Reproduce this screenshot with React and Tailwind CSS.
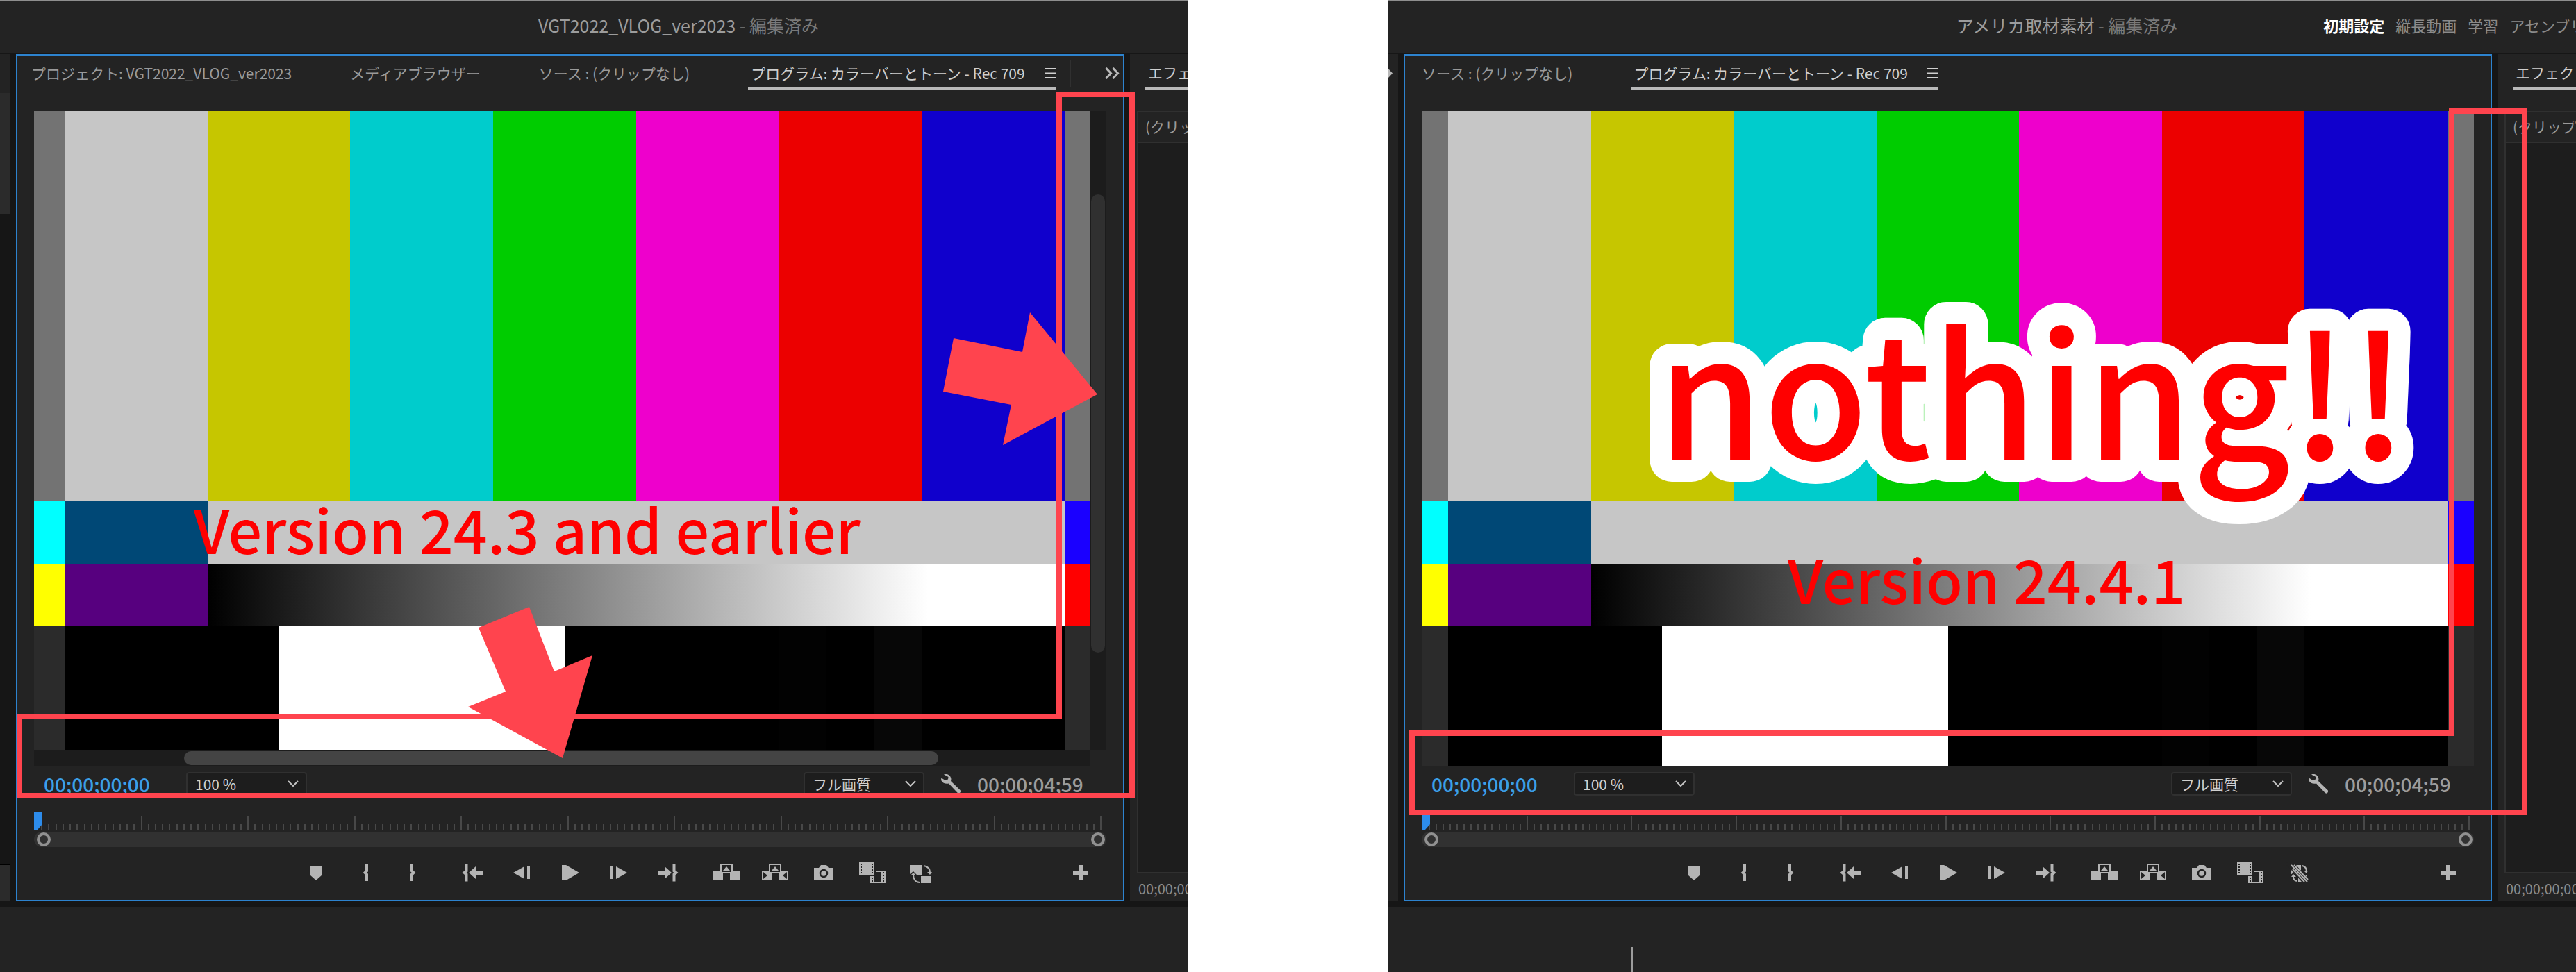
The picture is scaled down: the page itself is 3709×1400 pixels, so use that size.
import React from "react";

const FONT = "font-['Noto_Sans_CJK_JP',sans-serif]";

/* ---------- icons ---------- */
const icons = {
  marker: <path d="M11 7h18v12l-9 8-9-8z" />,
  markIn: (
    <path d="M23 4v9.5L20.500 16 23 18.500V28" fill="none" stroke="currentColor" strokeWidth="4" />
  ),
  markOut: (
    <path d="M18 4v9.500L20.500 16 18 18.500V28" fill="none" stroke="currentColor" strokeWidth="4" />
  ),
  goIn: (
    <>
      <path d="M10.500 3.500v10L7.500 16l3 2.500v10" fill="none" stroke="currentColor" strokeWidth="4" />
      <path d="M14 16l10-9v6h10v6H24v6z" />
    </>
  ),
  stepBack: <path d="M8 16L24 7v18zM28 7h4v18h-4z" />,
  play: <path d="M8 5h6l19 11-19 11H8z" />,
  stepForward: <path d="M32 16L16 7v18zM8 7h4v18H8z" />,
  goOut: (
    <>
      <path d="M29.500 3.500v10l3 2.500-3 2.500v10" fill="none" stroke="currentColor" strokeWidth="4" />
      <path d="M26 16L16 7v6H6v6h10v6z" />
    </>
  ),
  lift: (
    <>
      <path d="M1 13h10v4h4v10H1zM25 17h4v-4h10v14H25z" />
      <path d="M12 4h16v12H12z" fill="none" stroke="currentColor" strokeWidth="2" />
      <path d="M15 13l5-6 5 6z" />
    </>
  ),
  extract: (
    <>
      <path d="M1 13h10v4h4v10H1zM25 17h4v-4h10v14H25z" />
      <path d="M12 4h16v12H12z" fill="none" stroke="currentColor" strokeWidth="2" />
      <path d="M15 13l5-6 5 6z" />
      <path d="M3 15v10l6-5zM37 15v10l-6-5z" fill="#232323" />
    </>
  ),
  camera: (
    <>
      <path d="M6 9h7l3-4h8l3 4h7v18H6z" />
      <circle cx="20" cy="17" r="5" fill="none" stroke="#232323" strokeWidth="2.500" />
    </>
  ),
  compare: (
    <>
      <path d="M1 1h22v18H1z" />
      <path d="M25 13h14v18H17V21h6v8h10V15h-8z" />
      <path
        fill="#232323"
        d="M3 3h2v2H3zM3 7h2v2H3zM3 11h2v2H3zM3 15h2v2H3zM19 3h2v2h-2zM19 7h2v2h-2zM19 11h2v2h-2zM19 15h2v2h-2zM19 23h2v2h-2zM19 27h2v2h-2zM35 15h2v2h-2zM35 19h2v2h-2zM35 23h2v2h-2zM35 27h2v2h-2z"
      />
    </>
  ),
  proxy: (
    <>
      <path d="M4 5h18v14h-8l-5-5-5 4z" />
      <path d="M20 21h14v10H20z" />
      <path d="M24 6c6 1 9 5 9 10M18 30c-6 0-9-5-9-11" fill="none" stroke="currentColor" strokeWidth="2" />
      <path d="M29 15h7l-3 4zM5 20h8l-4-4z" />
    </>
  ),
  proxyOff: (
    <>
      <path d="M8 5h15v13H15l-3-2-4 3z" />
      <path d="M19 20h13v9H19z" />
      <path d="M25 6c4 1 6 4 6 8M17 28c-4-1-5-3-5-6" fill="none" stroke="currentColor" strokeWidth="2" />
      <path d="M27 13h6l-2 4zM9 22h7l-4-4z" />
      <path d="M5 0l30 34" stroke="#232323" strokeWidth="10" />
      <path d="M9 5l23 24M11 11l17 18M13 5l20 21" stroke="currentColor" strokeWidth="2" />
    </>
  ),
  plus: <path d="M17 5h6v8h8v6h-8v8h-6v-8H9v-6h8z" />,
};

function IconButton({ name, label }) {
  return (
    <button type="button" aria-label={label} className="h-8 w-10 text-[#b4b4b4]">
      <svg viewBox="0 0 40 32" className="block h-8 w-10" fill="currentColor">
        {icons[name]}
      </svg>
    </button>
  );
}

/* ---------- panel parts ---------- */
function Tab({ children, active }) {
  if (active) {
    return (
      <button
        type="button"
        className="-mr-1 flex h-[50px] items-center gap-7 border-b-4 border-[#b9b9b9] pt-1 pl-1 whitespace-nowrap text-[#cfcfcf]"
      >
        {children}
        <svg viewBox="0 0 16 15" className="h-[15px] w-4" fill="currentColor">
          <path d="M0 0h16v2H0zM0 6.500h16v2H0zM0 13h16v2H0z" />
        </svg>
      </button>
    );
  }
  return (
    <button type="button" className="flex h-[50px] items-center border-b-4 border-transparent pt-1 whitespace-nowrap text-[#9a9a9a]">
      {children}
    </button>
  );
}

function Dropdown({ label, value }) {
  return (
    <label className="relative block h-[34px] w-[174px]">
      <span className="sr-only">{label}</span>
      <select
        defaultValue={value}
        className="h-full w-full appearance-none rounded bg-[#1d1d1d] pl-[13px] text-[21px] leading-8 text-[#d0d0d0] ring-2 ring-[#303030] ring-inset"
      >
        <option>{value}</option>
      </select>
      <svg viewBox="0 0 16 9" className="pointer-events-none absolute top-[12px] right-3 h-[9px] w-4" fill="none" stroke="#c4c4c4" strokeWidth="2">
        <path d="M1 1l7 7 7-7" />
      </svg>
    </label>
  );
}

const BARS = ["bg-[#c6c6c6]", "bg-[#c6c600]", "bg-[#00cccc]", "bg-[#00cc00]", "bg-[#ee00cc]", "bg-[#ec0000]", "bg-[#1000cc]"];

function ColorBars({ edgeLeft, edgeRight, height }) {
  return (
    <div className={`flex min-w-0 flex-1 flex-col ${height}`}>
      <div className="flex h-[561px]">
        <div className={`bg-[#737373] ${edgeLeft}`} />
        {BARS.map((c) => (
          <div key={c} className={`flex-1 ${c}`} />
        ))}
        <div className={`bg-[#737373] ${edgeRight}`} />
      </div>
      <div className="flex h-[91px]">
        <div className={`bg-[#00ffff] ${edgeLeft}`} />
        <div className="flex-1 bg-[#004876]" />
        <div className="flex-6 bg-[#c6c6c6]" />
        <div className={`bg-[#1a00ff] ${edgeRight}`} />
      </div>
      <div className="flex h-[90px]">
        <div className={`bg-[#ffff00] ${edgeLeft}`} />
        <div className="flex-1 bg-[#57007f]" />
        <div className="flex-6 bg-linear-to-r/srgb from-black to-white to-84%" />
        <div className={`bg-[#ff0000] ${edgeRight}`} />
      </div>
      <div className="flex flex-1">
        <div className={`bg-[#2b2b2b] ${edgeLeft}`} />
        <div className="grid flex-1 grid-cols-[9fr_12fr_9fr_2fr_2fr_2fr_6fr] bg-black">
          <div />
          <div className="bg-white" />
          <div />
          <div className="bg-[#020202]" />
          <div />
          <div className="bg-[#070707]" />
        </div>
        <div className={`bg-[#2b2b2b] ${edgeRight}`} />
      </div>
    </div>
  );
}

function Timeline() {
  return (
    <div className="mx-6 mt-6">
      <div className="relative mr-[7px] flex h-[26px] items-end">
        {Array.from({ length: 150 }, (_, i) => (
          <div key={i} className={`flex-1 border-l-2 border-[#484848] ${i % 15 === 0 && i > 0 ? "h-[21px]" : "h-[9px]"}`} />
        ))}
        <div className="h-[21px] w-[2px] bg-[#484848]" />
        <svg viewBox="0 0 12 26" className="absolute top-0 left-0 h-[26px] w-3">
          <path d="M0 0h12v17l-7 8H0z" fill="#2d8ceb" />
        </svg>
      </div>
      <div className="mt-[2px] flex h-[22px] items-center justify-between rounded-full bg-[#313131] pr-[2px] pl-1">
        <button type="button" aria-label="ズーム開始" className="h-5 w-5 rounded-full border-4 border-[#919191]" />
        <button type="button" aria-label="ズーム終了" className="h-5 w-5 rounded-full border-4 border-[#919191]" />
      </div>
    </div>
  );
}

function Transport({ proxyIcon }) {
  return (
    <div className="mt-[21px] mb-[23px] grid grid-cols-[1fr_auto_1fr] items-center">
      <div className="mr-[46px] flex justify-end gap-[30px]">
        <IconButton name="marker" label="マーカーを追加" />
        <IconButton name="markIn" label="インをマーク" />
        <IconButton name="markOut" label="アウトをマーク" />
      </div>
      <div className="flex gap-[30px]">
        <IconButton name="goIn" label="インポイントへ移動" />
        <IconButton name="stepBack" label="1フレーム前へ" />
        <IconButton name="play" label="再生" />
        <IconButton name="stepForward" label="1フレーム先へ" />
        <IconButton name="goOut" label="アウトポイントへ移動" />
      </div>
      <div className="mr-[41px] ml-[45px] flex items-center gap-[30px]">
        <IconButton name="lift" label="リフト" />
        <IconButton name="extract" label="抽出" />
        <IconButton name="camera" label="フレームを書き出し" />
        <IconButton name="compare" label="比較表示" />
        <IconButton name={proxyIcon} label="プロキシの切り替え" />
        <div className="flex-1" />
        <IconButton name="plus" label="ボタンエディター" />
      </div>
    </div>
  );
}

function ControlRow() {
  return (
    <div className="mt-2 flex h-[34px] items-center pr-[56px] pl-[38px]">
      <span className="w-[205px] text-[28px] leading-8 font-medium text-[#3b9fe8]">00;00;00;00</span>
      <Dropdown label="ズームレベル" value="100 %" />
      <div className="flex-1" />
      <Dropdown label="再生時の解像度" value="フル画質" />
      <button type="button" aria-label="設定" className="mx-6 h-7 w-7">
        <svg viewBox="0 0 28 28" className="h-7 w-7" fill="#b4b4b4">
          <path d="M4 0.500C8-1 13 1 14 5c.7 2 .5 3.500 0 5L27.500 23c1 1.200 1 2.500 0 3.500-1.200 1.500-3 1.500-4.200 0L11 13.500C7 14.500 2 13 .5 9.500 0 8 0 7 .5 5.500L6 9l4-1.500.5-3.500z" />
        </svg>
      </button>
      <span className="w-[154px] text-[28px] leading-8 font-medium text-[#9c9c9c]">00;00;04;59</span>
    </div>
  );
}

function SidePanel({ width }) {
  return (
    <aside className={`ml-2 flex shrink-0 flex-col overflow-hidden bg-[#232323] ${width}`}>
      <div className="ml-[22px] h-[52px] w-[160px] border-b-4 border-[#b9b9b9] pt-[10px] pl-1 text-[21px] leading-8 whitespace-nowrap text-[#cfcfcf]">
        エフェクト
      </div>
      <div className="mt-[30px] ml-[10px] flex w-[200px] flex-1 flex-col border-2 border-[#303030] bg-[#1d1d1d]">
        <div className="h-[44px] border-b-2 border-[#303030] bg-[#232323] pl-[10px] text-[21px] leading-10 whitespace-nowrap text-[#9a9a9a]">
          (クリップなし)
        </div>
      </div>
      <div className="h-[40px] pl-3 text-[20px] leading-[44px] whitespace-nowrap text-[#8b8b8b]">00;00;00;00</div>
    </aside>
  );
}

function TitleBar({ title, children }) {
  return (
    <header className="grid h-[76px] grid-cols-[minmax(0,1fr)_auto_minmax(0,1fr)] items-center border-t-2 border-[#8e8e8e] bg-[#232323] pb-[6px] pl-[244px] whitespace-nowrap">
      <div />
      <h1 className="text-[25px] leading-8 text-[#9c9c9c]">
        {title}
        <span className="text-[#7a7a7a]"> - 編集済み</span>
      </h1>
      <div className="overflow-hidden">{children}</div>
    </header>
  );
}

/* ---------- annotations ---------- */
function Overlay({ children }) {
  return (
    <svg
      viewBox="0 0 1710 1400"
      className={`pointer-events-none absolute top-0 left-0 w-full ${FONT}`}
    >
      {children}
    </svg>
  );
}

export default function App() {
  return (
    <main className={`flex min-h-screen w-full gap-[289px] bg-white ${FONT}`}>
      {/* version 24.3 */}
      <section className="relative flex min-w-0 flex-1 flex-col overflow-hidden bg-[#161616]">
        <TitleBar title="VGT2022_VLOG_ver2023" />
        <div className="mt-[2px] flex">
          <div className="mr-2 flex w-[15px] flex-col bg-[#2b2b2b]">
            <div className="h-[56px] bg-[#232323]" />
            <div className="h-[174px]" />
            <div className="flex-1 border-b-2 border-black bg-[#161616]" />
            <div className="h-[52px]" />
          </div>
          <div className="flex min-w-0 flex-1 flex-col border-2 border-[#2d83cf] bg-[#232323]">
            <nav className="flex h-[80px] gap-[84px] pl-5 text-[21px] leading-8">
              <Tab>プロジェクト: VGT2022_VLOG_ver2023</Tab>
              <Tab>メディアブラウザー</Tab>
              <Tab>ソース : (クリップなし)</Tab>
              <Tab active>プログラム: カラーバーとトーン - Rec 709</Tab>
              <div className="flex flex-1">
                <div className="mt-[6px] -ml-[60px] h-10 w-[2px] bg-[#303030]" />
                <div className="flex-1" />
                <button type="button" aria-label="その他のタブ" className="mr-1 h-[50px]">
                  <svg viewBox="0 0 22 17" className="h-[17px] w-[22px]" fill="none" stroke="#b9b9b9" strokeWidth="3">
                    <path d="M1.500 1l7 7.500-7 7.500M11.500 1l7 7.500-7 7.500" />
                  </svg>
                </button>
              </div>
            </nav>
            <div className="mx-6 flex">
              <ColorBars edgeLeft="w-[44px]" edgeRight="w-[36px]" height="h-[920px]" />
              <div className="w-6 bg-[#1c1c1c] px-[2px] pt-[120px]">
                <div className="h-[660px] rounded-full bg-[#303030]" />
              </div>
            </div>
            <div className="mr-12 ml-6 h-6 bg-[#1c1c1c] py-[2px] pr-[218px] pl-[216px]">
              <div className="h-5 rounded-full bg-[#444444]" />
            </div>
            <ControlRow />
            <Timeline />
            <Transport proxyIcon="proxy" />
          </div>
          <SidePanel width="w-[83px]" />
        </div>
        <div className="mt-2 flex-1 bg-[#232323]" />
        <Overlay>
          <path d="M1630 1146H28V1032H1525V136H1630Z" fill="none" stroke="#ff444e" strokeWidth="8" />
          <path fill="#ff444e" d="M1373 487L1472 507L1483 450L1580 568L1444 641L1456 583L1358 564Z" />
          <path fill="#ff444e" d="M762 874L798 967L853 944L810 1092L674 1018L728 996L689 904Z" />
          <text x="279" y="798" fill="#ff0000" fontSize="86" fontWeight="500">
            Version 24.3 and earlier
          </text>
        </Overlay>
      </section>

      {/* version 24.4.1 */}
      <section className="relative flex min-w-0 flex-1 flex-col overflow-hidden bg-[#161616]">
        <TitleBar title="アメリカ取材素材">
          <div className="flex items-center pl-[176px] text-[22px] leading-8 text-[#8b8b8b]">
            <span className="mr-[17px] h-3 w-1 bg-[#555555]" />
            <span className="mr-[17px] h-[2px] w-2 bg-[#444444]" />
            <nav className="flex gap-4">
              <button type="button" className="font-bold text-white">初期設定</button>
              <button type="button">縦長動画</button>
              <button type="button">学習</button>
              <button type="button">アセンブリ</button>
            </nav>
          </div>
        </TitleBar>
        <div className="mt-[2px] flex">
          <div className="mr-2 w-[14px] bg-[#232323] pt-[19px]">
            <svg viewBox="0 0 6 17" className="h-[17px] w-[6px]" fill="#b9b9b9">
              <path d="M0 2l6 6.500-6 6.500z" />
            </svg>
          </div>
          <div className="flex min-w-0 flex-1 flex-col border-2 border-[#2d83cf] bg-[#232323]">
            <nav className="flex h-[80px] gap-[84px] pl-6 text-[21px] leading-8">
              <Tab>ソース : (クリップなし)</Tab>
              <Tab active>プログラム: カラーバーとトーン - Rec 709</Tab>
            </nav>
            <div className="mx-6 flex">
              <ColorBars edgeLeft="w-[38px]" edgeRight="w-[38px]" height="h-[944px]" />
            </div>
            <ControlRow />
            <Timeline />
            <Transport proxyIcon="proxyOff" />
          </div>
          <SidePanel width="w-[113px]" />
        </div>
        <div className="mt-2 flex-1 bg-[#232323] pt-[58px] pl-[350px]">
          <div className="h-full w-[2px] bg-[#9c9c9c]" />
        </div>
        <Overlay>
          <path d="M1636 1170H34V1056H1531V160H1636Z" fill="none" stroke="#ff444e" strokeWidth="8" />
          <text
            x="387"
            y="662"
            fill="#ff0000"
            fontSize="245"
            fontWeight="500"
            stroke="#ffffff"
            strokeWidth="64"
            strokeLinejoin="round"
            paintOrder="stroke"
          >
            nothing!!
          </text>
          <text x="575" y="870" fill="#ff0000" fontSize="86" fontWeight="500">
            Version 24.4.1
          </text>
        </Overlay>
      </section>
    </main>
  );
}
